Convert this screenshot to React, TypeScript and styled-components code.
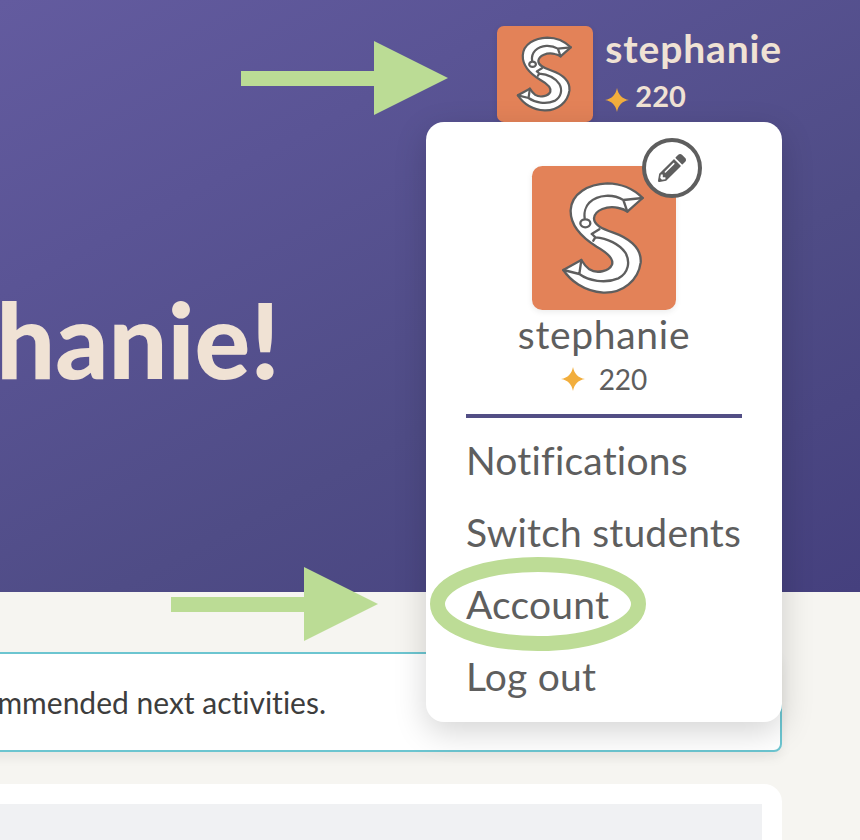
import { createGlobalStyle, styled } from "styled-components";
import { FaPencilAlt } from "react-icons/fa";

const GlobalStyle = createGlobalStyle`
    html, body {
        margin: 0;
        padding: 0;
        height: 840px;
        overflow: hidden;
        background: #f6f5f1;
        font-family: "Lato", "Open Sans", sans-serif;
        font-variant-ligatures: none;
    }
`

const Page = styled.div`
    position: relative;
    width: 860px;
    height: 840px;
    overflow: hidden;
`

const Hero = styled.header`
    background: linear-gradient(152deg, #635b9f 0%, #5a5495 28%, #4f4c86 62%, #45407e 100%);
    display: flex;
    flex-direction: column;
    height: 592px;
    box-sizing: border-box;
    padding: 26px 78px 0 0;
`

const UserChip = styled.div`
    display: flex;
    justify-content: flex-end;
    gap: 12px;
`

const ChipText = styled.div`
    color: #f0e2d4;
    display: flex;
    flex-direction: column;
    font-weight: 700;
`

const ChipName = styled.span`
    font-size: 39px;
    letter-spacing: .85px;
    line-height: 44px;
`

const ChipPoints = styled.span`
    display: flex;
    align-items: center;
    gap: 6px;
    font-size: 29px;
    line-height: 32px;
    margin-top: 10px;
`

const Avatar = styled.div<{ size: number }>`
    background: #e38258;
    border-radius: ${props => props.size / 14}px;
    box-shadow: 0 2px 6px rgba(0, 0, 0, .08);
    flex: none;
    height: ${props => props.size}px;
    width: ${props => props.size}px;

    svg {
        display: block;
    }
`

const Greeting = styled.h1`
    color: #f0e2d4;
    display: flex;
    justify-content: flex-end;
    font-size: 104px;
    font-weight: 900;
    line-height: 120px;
    margin: 157px 502px 0 -400px;
    white-space: nowrap;
`

const Main = styled.main`
    display: flex;
    flex-direction: column;
    gap: 32px;
    margin: 0 78px 0 -20px;
    padding-top: 60px;
`

const Notice = styled.div`
    background: #fff;
    border: 2px solid #6cc5d0;
    border-radius: 8px;
    box-shadow: 0 6px 12px rgba(0, 0, 0, .06);
    box-sizing: border-box;
    color: #3d3d3d;
    display: flex;
    justify-content: flex-end;
    align-items: center;
    font-size: 30px;
    height: 100px;
    padding-right: 454px;
    white-space: nowrap;
`

const Card = styled.section`
    background: #fff;
    border-radius: 18px;
    height: 200px;
    padding: 20px;
`

const CardInner = styled.div`
    background: #f0f1f3;
    height: 100%;
`

const Menu = styled.nav`
    background: #fff;
    border-radius: 18px;
    box-shadow: 0 10px 32px rgba(0, 0, 0, .17);
    box-sizing: border-box;
    color: #5e5e5e;
    display: flex;
    flex-direction: column;
    height: 600px;
    left: 426px;
    padding: 44px 40px 0;
    position: absolute;
    top: 122px;
    width: 356px;
`

const MenuProfile = styled.div`
    align-items: center;
    border-bottom: 4px solid #524e85;
    box-sizing: border-box;
    display: flex;
    flex-direction: column;
    height: 252px;
    margin-bottom: 6px;
    flex: none;
`

const AvatarWrap = styled.div`
    position: relative;
`

const EditButton = styled.button`
    align-items: center;
    background: #fff;
    border: 4px solid #5e5e5e;
    border-radius: 50%;
    box-sizing: border-box;
    color: #5e5e5e;
    display: flex;
    height: 60px;
    justify-content: center;
    padding: 0;
    position: absolute;
    right: -26px;
    top: -28px;
    width: 60px;
`

const ProfileName = styled.div`
    font-size: 39px;
    letter-spacing: .7px;
    line-height: 44px;
    margin-top: 2px;
`

const ProfilePoints = styled.div`
    align-items: center;
    display: flex;
    font-size: 28px;
    gap: 14px;
    line-height: 36px;
    margin-top: 5px;
`

const MenuItem = styled.a`
    display: block;
    font-size: 39px;
    letter-spacing: .2px;
    line-height: 72px;
    white-space: nowrap;
`

const Annotation = styled.svg<{ left: number, top: number }>`
    left: ${props => props.left}px;
    overflow: visible;
    position: absolute;
    top: ${props => props.top}px;
`

const SparkleIcon = styled.svg<{ drop: number }>`
    flex: none;
    margin-top: ${props => props.drop}px;
`

const LogoS = ({ size }: { size: number }) => (
    <svg width={size} height={size} viewBox="36 108 432 432">
        <g fill="#fff" stroke="#5e5e5e" strokeWidth={size > 120 ? 7 : 10} strokeLinejoin="round" strokeLinecap="round">
            <path d="M368 204 C340 176 300 160 262 160 C205 162 155 190 152 240 C150 285 185 322 230 350 C262 368 282 385 276 404 C268 424 230 432 208 418 C197 410 190 400 184 390 L130 420 C150 450 190 484 250 488 C310 490 355 450 362 398 C366 350 320 322 280 308 C245 296 222 285 222 265 C224 240 262 226 296 234 C306 236 316 240 322 245 Z" />
            <path fill="none" d="M322 245 L310 210 L368 204 M310 210 C280 192 235 192 208 218 C196 230 192 250 194 264 M130 420 L178 432 L184 390 M178 432 C205 452 255 462 295 445 C325 430 332 395 316 368 C298 342 262 325 226 322 L220 332 M215 312 L238 298 M226 322 L216 312" />
            <ellipse cx="196" cy="280" rx="15" ry="12" />
        </g>
    </svg>
)

const Sparkle = ({ drop = 0 }: { drop?: number }) => (
    <SparkleIcon drop={drop} width={24} height={24} viewBox="0 0 24 24">
        <path fill="#f2ae3d" d="M12 0 C13.2 6.5 17 10.8 24 12 C17 13.2 13.2 17.5 12 24 C10.8 17.5 7 13.2 0 12 C7 10.8 10.8 6.5 12 0 Z" />
    </SparkleIcon>
)

const Arrow = ({ left, top }: { left: number, top: number }) => (
    <Annotation left={left} top={top} width={207} height={74} viewBox="0 0 207 74">
        <path fill="#bbdc95" d="M0 30 H133 V0 L207 37 L133 74 V45 H0 Z" />
    </Annotation>
)

const menuItems = ["Notifications", "Switch students", "Account", "Log out"];

const App = () => {
    return (
        <Page>
            <GlobalStyle />
            <Hero>
                <UserChip>
                    <Avatar size={96}><LogoS size={96} /></Avatar>
                    <ChipText>
                        <ChipName>stephanie</ChipName>
                        <ChipPoints><Sparkle drop={8} /> 220</ChipPoints>
                    </ChipText>
                </UserChip>
                <Greeting>Welcome back, stephanie!</Greeting>
            </Hero>
            <Main>
                <Notice>Here are your recommended next activities.</Notice>
                <Card><CardInner /></Card>
            </Main>
            <Menu>
                <MenuProfile>
                    <AvatarWrap>
                        <Avatar size={144}><LogoS size={144} /></Avatar>
                        <EditButton><FaPencilAlt size={28} /></EditButton>
                    </AvatarWrap>
                    <ProfileName>stephanie</ProfileName>
                    <ProfilePoints><Sparkle /> 220</ProfilePoints>
                </MenuProfile>
                {menuItems.map(item => <MenuItem key={item}>{item}</MenuItem>)}
            </Menu>
            <Arrow left={241} top={41} />
            <Arrow left={171} top={567} />
            <Annotation left={430} top={557} width={216} height={94} viewBox="0 0 216 94">
                <ellipse cx="108" cy="47" rx="100.5" ry="39.5" fill="none" stroke="#bddc96" strokeWidth={15} />
            </Annotation>
        </Page>
    );
}

export default App;
